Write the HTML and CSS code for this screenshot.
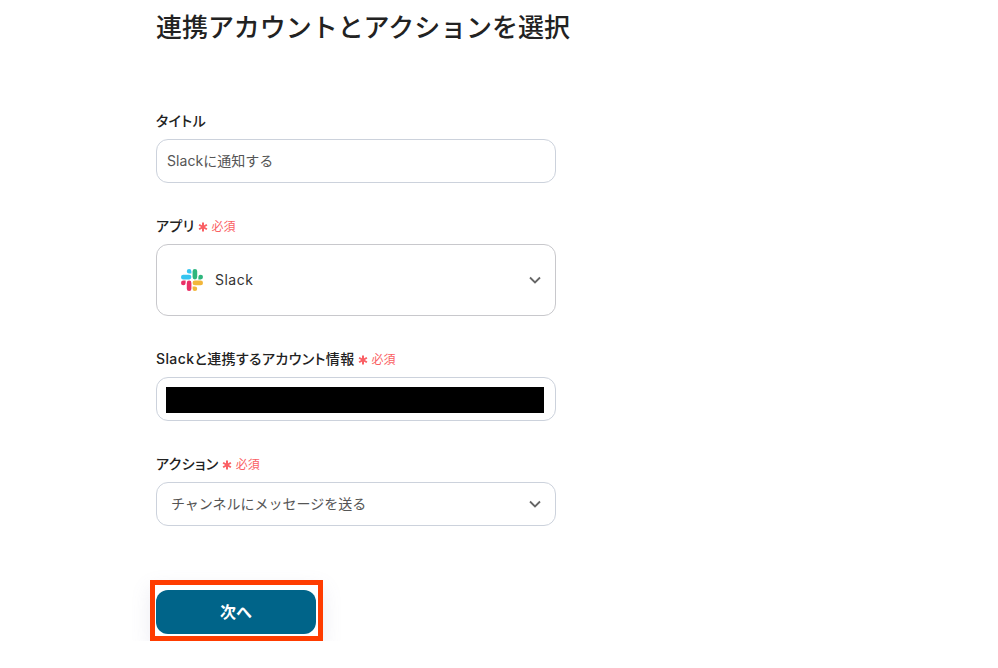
FILE: index.html
```html
<!DOCTYPE html>
<html lang="ja">
<head>
    <meta charset="utf-8">
    <title>連携アカウントとアクションを選択</title>
    <link rel="stylesheet" href="styles.css">
</head>
<body>
    <main class="page">
        <h1 class="page-title">連携アカウントとアクションを選択</h1>

        <form class="form">
            <div class="field">
                <div class="field-label">タイトル</div>
                <div class="box box-text">Slackに通知する</div>
            </div>

            <div class="field">
                <div class="field-label">アプリ
                    <span class="required">
                        <svg class="required-mark" viewBox="0 0 10 10" aria-hidden="true"><path d="M5 .5v9M1.1 2.75l7.8 4.5M8.9 2.75l-7.8 4.5"/></svg>
                        <span class="required-text">必須</span>
                    </span>
                </div>
                <div class="box box-app">
                    <svg class="slack-logo" viewBox="0 0 122.8 122.8" aria-hidden="true">
                        <path fill="#ea2f66" d="M25.8 77.6a12.9 12.9 0 1 1-12.9-12.9h12.9zm6.5 0a12.9 12.9 0 0 1 25.8 0v32.3a12.9 12.9 0 1 1-25.8 0z"/>
                        <path fill="#36c5f0" d="M45.2 25.8a12.9 12.9 0 1 1 12.9-12.9v12.9zm0 6.5a12.9 12.9 0 0 1 0 25.8H12.9a12.9 12.9 0 1 1 0-25.8z"/>
                        <path fill="#2eb67d" d="M97 45.2a12.9 12.9 0 1 1 12.9 12.9H97zm-6.5 0a12.9 12.9 0 0 1-25.8 0V12.9a12.9 12.9 0 1 1 25.8 0z"/>
                        <path fill="#f2b63a" d="M77.6 97a12.9 12.9 0 1 1-12.9 12.9V97zm0-6.5a12.9 12.9 0 0 1 0-25.8h32.3a12.9 12.9 0 1 1 0 25.8z"/>
                    </svg>
                    <span class="app-name">Slack</span>
                    <svg class="chevron chevron-app" viewBox="0 0 12 8" aria-hidden="true"><path d="M1 1.5l5 5 5-5"/></svg>
                </div>
            </div>

            <div class="field">
                <div class="field-label">Slackと連携するアカウント情報
                    <span class="required">
                        <svg class="required-mark" viewBox="0 0 10 10" aria-hidden="true"><path d="M5 .5v9M1.1 2.75l7.8 4.5M8.9 2.75l-7.8 4.5"/></svg>
                        <span class="required-text">必須</span>
                    </span>
                </div>
                <div class="box box-masked"><div class="mask"></div></div>
            </div>

            <div class="field">
                <div class="field-label">アクション
                    <span class="required">
                        <svg class="required-mark" viewBox="0 0 10 10" aria-hidden="true"><path d="M5 .5v9M1.1 2.75l7.8 4.5M8.9 2.75l-7.8 4.5"/></svg>
                        <span class="required-text">必須</span>
                    </span>
                </div>
                <div class="box box-select">
                    <span>チャンネルにメッセージを送る</span>
                    <svg class="chevron" viewBox="0 0 12 8" aria-hidden="true"><path d="M1 1.5l5 5 5-5"/></svg>
                </div>
            </div>

            <div class="actions">
                <div class="highlight">
                    <button type="button" class="next-button">次へ</button>
                </div>
            </div>
        </form>
    </main>
</body>
</html>
```

FILE: styles.css
```css
* {
    box-sizing: border-box;
}

body {
    margin: 0;
    background: #fff;
    color: #222;
    font-family: Inter, "Noto Sans CJK JP", sans-serif;
    overflow: hidden;
}

.page {
    width: 400px;
    margin-left: 156px;
    padding-top: 9px;
}

.page-title {
    margin: 0;
    font-size: 26px;
    line-height: 38px;
    font-weight: 500;
    letter-spacing: -0.05px;
    white-space: nowrap;
}

.form {
    margin-top: 64px;
}

.field {
    margin-bottom: 33px;
}

.field-label {
    display: flex;
    align-items: center;
    gap: 3px;
    height: 20px;
    margin-bottom: 8px;
    font-size: 14px;
    line-height: 20px;
    font-weight: 500;
    font-feature-settings: "palt";
    letter-spacing: 0.4px;
    white-space: nowrap;
}

.required {
    display: inline-flex;
    align-items: center;
    gap: 4px;
    color: #fa5f64;
    font-size: 12px;
    font-weight: 400;
    font-feature-settings: normal;
    letter-spacing: 0;
}

.required-mark {
    width: 10px;
    height: 10px;
    margin-top: 2px;
    fill: none;
    stroke: #fa5f64;
    stroke-width: 2;
}

.required-text {
    margin-top: 2px;
}

.box {
    width: 400px;
    height: 44px;
    padding-bottom: 2px;
    border: 1px solid #ccd2dc;
    border-radius: 12px;
    background: #fff;
    font-size: 14px;
    color: #555;
    display: flex;
    align-items: center;
}

.box-text {
    padding: 0 0 3px 10px;
    letter-spacing: 0.05px;
}

.box-app {
    height: 72px;
    padding: 0 14px 1px 24px;
    border-color: #c8c8cc;
    color: #333;
    gap: 12px;
}

.slack-logo {
    width: 22px;
    height: 22px;
    margin-top: 1px;
    flex: none;
}

.app-name {
    letter-spacing: 0.5px;
}

.box-masked {
    padding: 2px 11px 0 9px;
}

.mask {
    width: 100%;
    height: 26px;
    background: #000;
}

.box-select {
    padding: 0 14px 2px;
}

.chevron {
    width: 12px;
    height: 8px;
    margin-top: 2px;
    margin-left: auto;
    fill: none;
    stroke: #666;
    stroke-width: 1.8;
}

.chevron-app {
    margin-top: 1px;
}

.actions {
    margin-top: 54px;
}

.highlight {
    width: 173px;
    height: 61px;
    margin-left: -6px;
    padding: 5px 2px 2px 1px;
    border: 5px solid #ff3c00;
    box-shadow: 0 8px 20px rgba(120, 120, 170, 0.14);
}

.next-button {
    display: block;
    width: 160px;
    height: 44px;
    padding: 0 0 2px;
    border: none;
    border-radius: 12px;
    background: #006489;
    color: #fff;
    font-family: inherit;
    font-size: 16px;
    font-weight: 600;
}
```
